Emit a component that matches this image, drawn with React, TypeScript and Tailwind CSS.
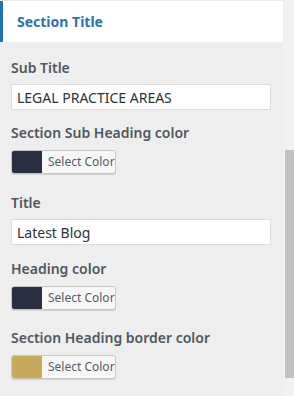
import React from "react"

function Label({ children }: { children: React.ReactNode }) {
  return <div className="text-[14px] leading-5 font-semibold text-[#50575e] whitespace-nowrap">{children}</div>
}

function TextInput({ value }: { value: string }) {
  return (
    <div className="mt-[6px] h-[26px] w-[260px] bg-white border border-[#dddddd] flex items-center pl-[5px] text-[14px] text-[#2c3338]">
      {value}
    </div>
  )
}

function ColorButton({ color }: { color: string }) {
  return (
    <div className="mt-[7px] flex h-[24px] w-[105px] rounded-[3px] border border-[#c7c7c7] bg-[#f7f7f7] overflow-hidden shadow-[0_1px_0_#d4d4d4]">
      <div className="w-[30px] h-full" style={{ backgroundColor: color }} />
      <div className="flex-1 flex items-center pl-[6px] text-[12px] text-[#555d66]">Select Color</div>
    </div>
  )
}

export default function App() {
  return (
    <div
      className="w-[294px] h-[396px] bg-[#eeeeee] flex overflow-hidden"
      style={{ fontFamily: '"Noto Sans", "Open Sans", sans-serif' }}
    >
      <div className="w-[283px] flex flex-col">
        <div className="mt-px h-[41px] bg-white border-l-[3px] border-[#2271b1] flex items-center pl-[14px]">
          <span className="text-[14px] font-bold text-[#2b73b0]">Section Title</span>
        </div>

        <div className="pl-[11px]">
          <div className="mt-4">
            <Label>Sub Title</Label>
            <TextInput value="LEGAL PRACTICE AREAS" />
          </div>
          <div className="mt-[13px]">
            <Label>Section Sub Heading color</Label>
            <ColorButton color="#2a2e42" />
          </div>
          <div className="mt-[19px]">
            <Label>Title</Label>
            <TextInput value="Latest Blog" />
          </div>
          <div className="mt-[14px]">
            <Label>Heading color</Label>
            <ColorButton color="#2a2e42" />
          </div>
          <div className="mt-[18px]">
            <Label>Section Heading border color</Label>
            <ColorButton color="#c9aa5c" />
          </div>
        </div>
      </div>

      <div className="w-[11px] h-full bg-[#f1f1f1] pl-[2px]">
        <div className="mt-[150px] h-[228px] bg-[#c1c1c1]" />
      </div>
    </div>
  )
}
